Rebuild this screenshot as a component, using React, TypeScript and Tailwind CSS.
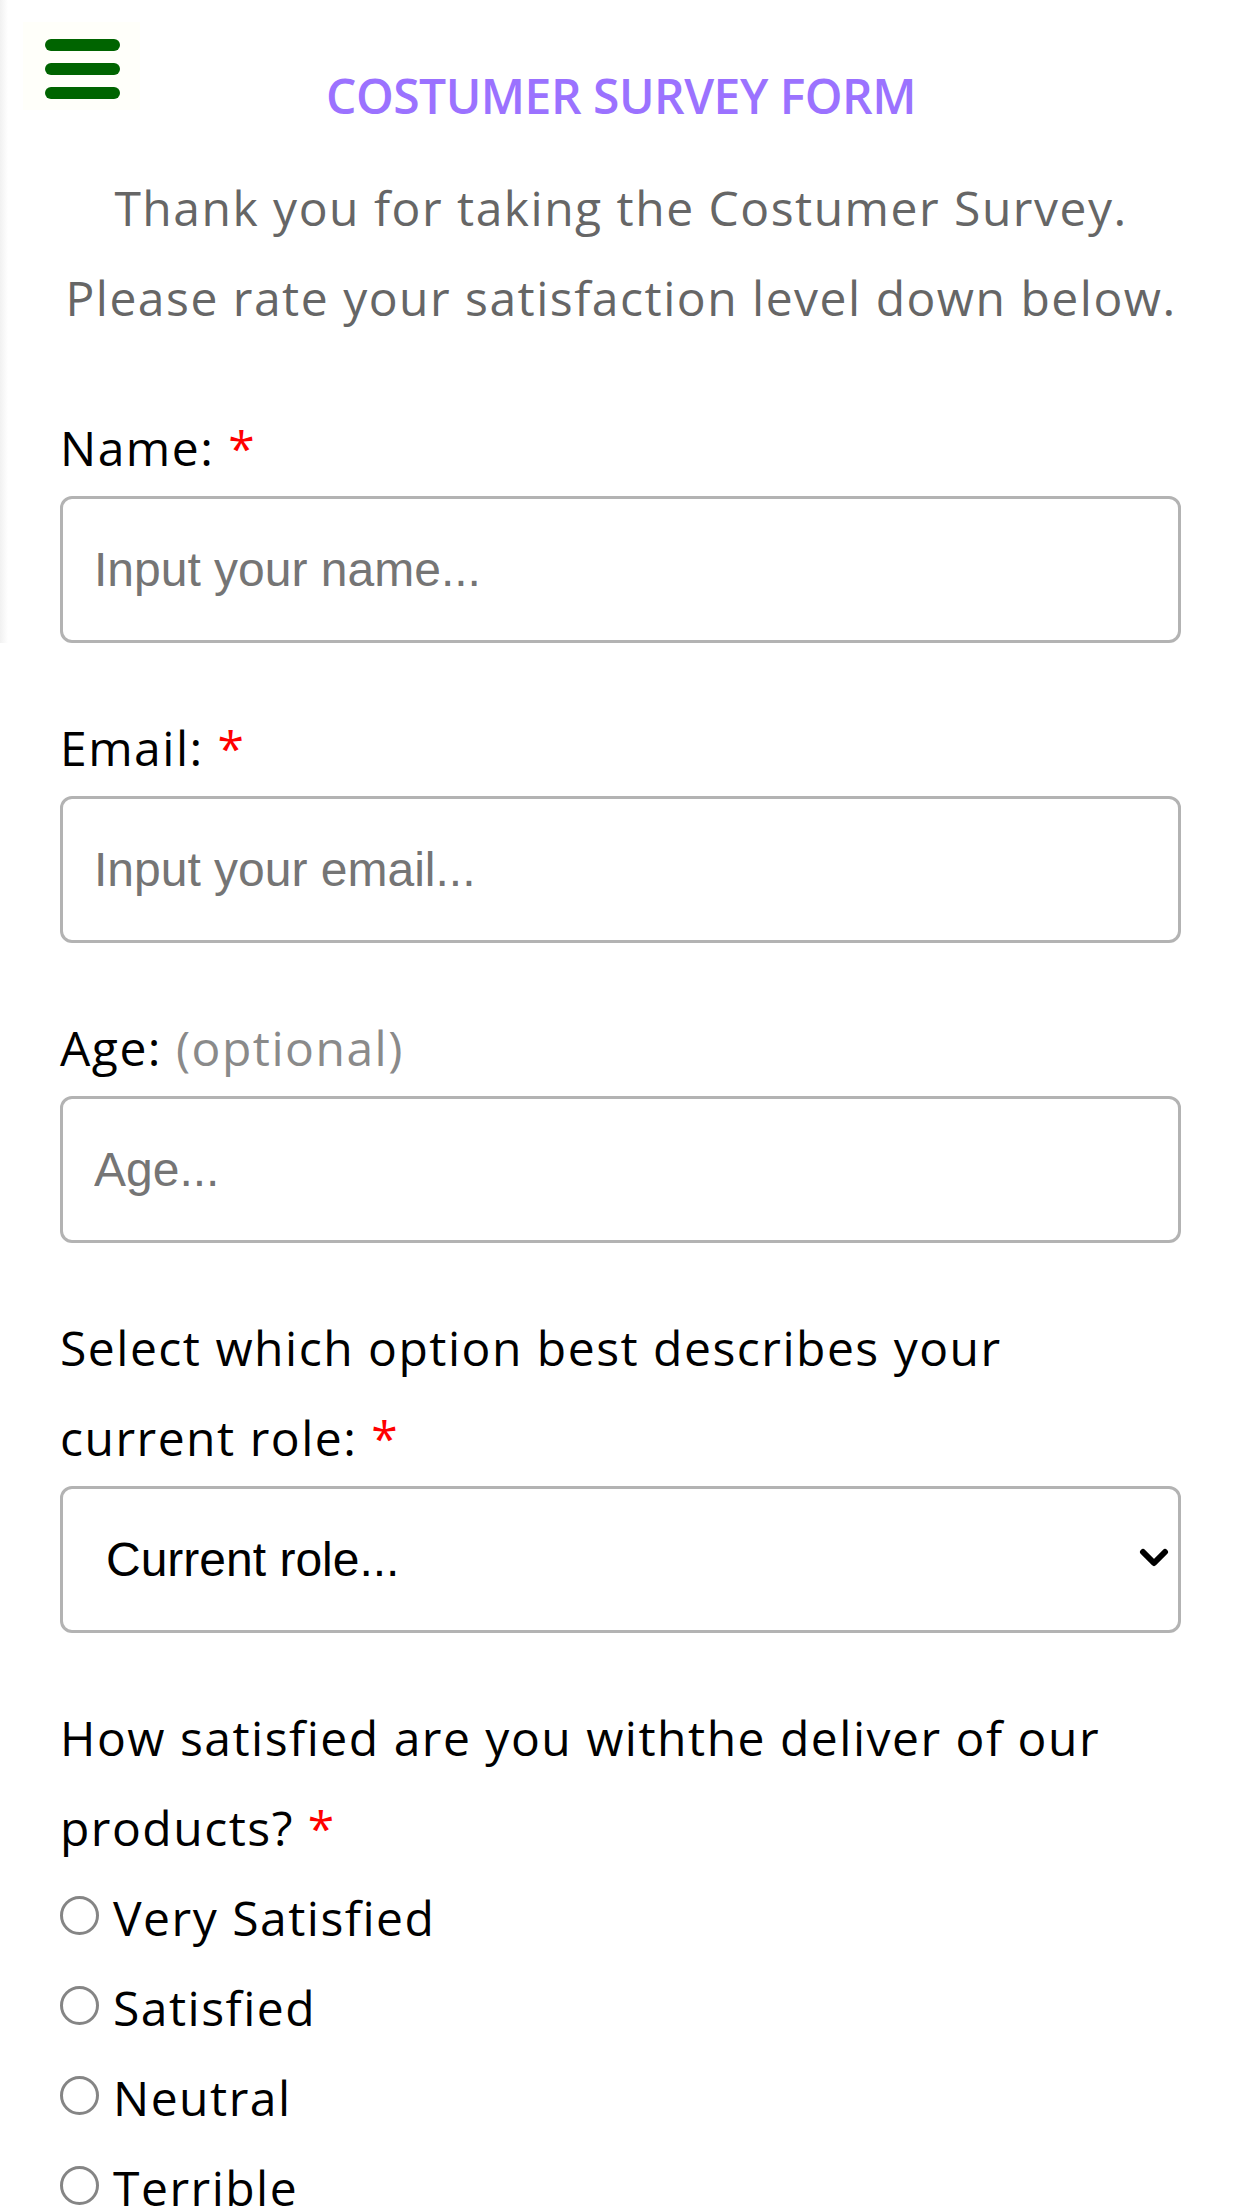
import { useState } from "react"

const fieldLabel = "block text-[48px] leading-[90px] tracking-[1.5px] text-black"
const textInput =
  "mt-[3px] block w-full h-[147px] rounded-[12px] border-[3px] border-[#b3b3b3] bg-white px-[31px] text-[48px] text-black placeholder:text-[#757575] outline-none"

function Required() {
  return <span className="text-[#ff0000]">*</span>
}

function TextField({ label, placeholder, type = "text", optional = false }: { label: string; placeholder: string; type?: string; optional?: boolean }) {
  return (
    <div className="mb-[60px]">
      <label className={fieldLabel}>
        {label}{" "}
        {optional ? <span className="text-[#8a8a8a]">(optional)</span> : <Required />}
      </label>
      <input type={type} placeholder={placeholder} className={textInput} style={{ fontFamily: '"Liberation Sans", Arial, sans-serif' }} />
    </div>
  )
}

export default function App() {
  const [choice, setChoice] = useState("")
  const options = ["Very Satisfied", "Satisfied", "Neutral", "Terrible"]

  return (
    <div className="relative min-h-[2208px] w-full overflow-hidden bg-white" style={{ fontFamily: '"Open Sans", "Noto Sans", sans-serif' }}>
      {/* faint shadow of the hidden side menu */}
      <div className="absolute left-0 top-0 h-[643px] w-[8px] bg-linear-to-r from-[#f1f1f1] to-transparent" />

      {/* menu button */}
      <button type="button" className="absolute left-[23px] top-[22px] flex h-[88px] w-[117px] flex-col gap-[12px] bg-[#fffffa] px-[22px] pt-[17px]">
        <span className="block h-[12px] w-[75px] rounded-full bg-[#006400]" />
        <span className="block h-[12px] w-[75px] rounded-full bg-[#006400]" />
        <span className="block h-[12px] w-[75px] rounded-full bg-[#006400]" />
      </button>

      <h1 className="mt-[72px] text-center text-[48px] font-semibold leading-[48px] tracking-[-0.5px] text-[#9b72ff]">
        COSTUMER SURVEY FORM
      </h1>

      <p className="mt-[43px] text-center text-[48px] leading-[90px] tracking-[1.5px] text-[#666]">
        Thank you for taking the Costumer Survey.
        <br />
        Please rate your satisfaction level down below.
      </p>

      <form className="mt-[60px] pl-[60px] pr-[61px]">
        <TextField label="Name:" placeholder="Input your name..." />
        <TextField label="Email:" type="email" placeholder="Input your email..." />
        <TextField label="Age:" type="number" placeholder="Age..." optional />

        <div className="mb-[60px]">
          <label className={fieldLabel}>
            Select which option best describes your current role: <Required />
          </label>
          <div className="relative mt-[3px]">
            <select
              defaultValue=""
              className="block h-[147px] w-full appearance-none rounded-[12px] border-[3px] border-[#b3b3b3] bg-white pl-[43px] text-[48px] text-black outline-none"
              style={{ fontFamily: '"Liberation Sans", Arial, sans-serif' }}
            >
              <option value="" disabled>Current role...</option>
              <option value="student">Student</option>
              <option value="full-time">Full Time Job</option>
              <option value="learner">Full Time Learner</option>
              <option value="other">Other</option>
            </select>
            <svg className="pointer-events-none absolute right-[12px] top-[62px]" width="30" height="20" viewBox="0 0 30 20">
              <polyline points="4,4 15,15 26,4" fill="none" stroke="#000" strokeWidth="6" strokeLinecap="round" strokeLinejoin="round" />
            </svg>
          </div>
        </div>

        <div>
          <p className={fieldLabel}>
            How satisfied are you withthe deliver of our products? <Required />
          </p>
          {options.map((o) => (
            <label key={o} className="flex h-[90px] items-center gap-[14px] text-[48px] tracking-[1.5px] text-black">
              <input
                type="radio"
                name="satisfaction"
                value={o}
                checked={choice === o}
                onChange={() => setChoice(o)}
                className="-mt-[6px] h-[39px] w-[39px] shrink-0 appearance-none rounded-full border-[3px] border-[#858585] bg-white checked:border-[12px] checked:border-[#0075ff]"
              />
              {o}
            </label>
          ))}
        </div>
      </form>
    </div>
  )
}
